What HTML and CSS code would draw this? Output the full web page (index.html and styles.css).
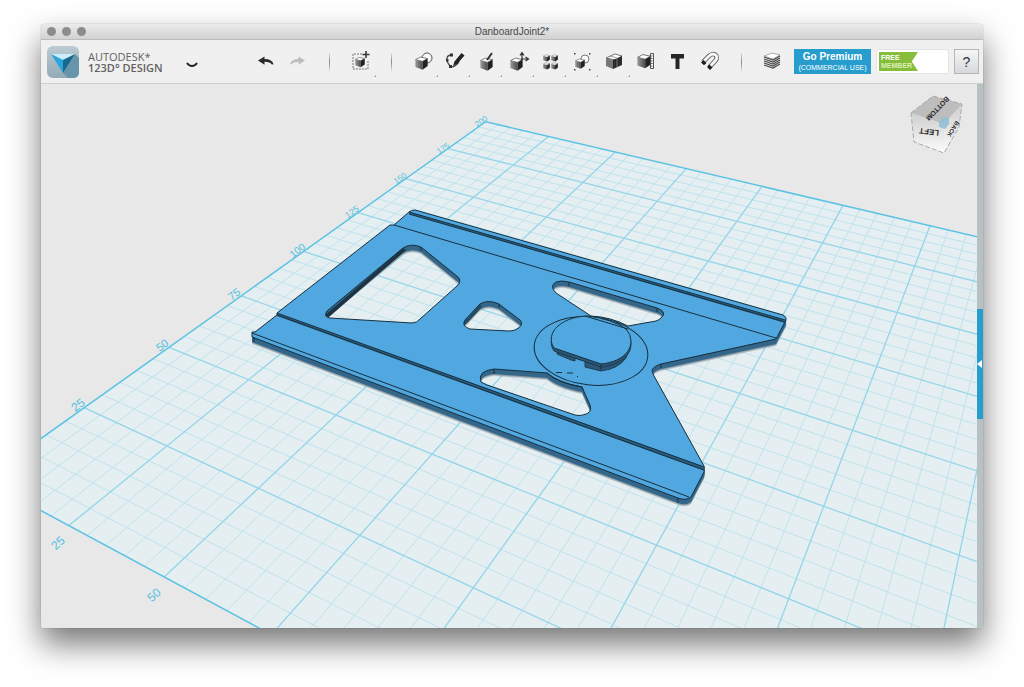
FILE: index.html
```html
<!DOCTYPE html>
<html lang="en">
<head>
    <meta charset="utf-8">
    <title>DanboardJoint2*</title>
    <link rel="stylesheet" href="styles.css">
</head>
<body>
<!-- shared icon shapes -->
<svg class="defs" width="0" height="0" aria-hidden="true">
    <defs>
        <linearGradient id="cube-side" x1="0" y1="0" x2="1" y2="0">
            <stop offset="0" stop-color="#9a9a9a"/>
            <stop offset="1" stop-color="#4c4c4c"/>
        </linearGradient>
        <symbol id="cube" viewBox="0 0 12 13">
            <path d="M0.5 3.4 5 1 11.5 2.4 7 5z" fill="#fff" stroke="#555" stroke-width=".7"/>
            <path d="M.3 3.4 7 5v7.7L.3 10.3z" fill="url(#cube-side)"/>
            <path d="M7 5l4.7-2.6v7L7 12.7z" fill="#222"/>
        </symbol>
    </defs>
</svg>

<div class="window">
    <header class="titlebar">
        <div class="lights"><span></span><span></span><span></span></div>
        <h1>DanboardJoint2*</h1>
    </header>

    <nav class="toolbar">
        <svg class="logo" viewBox="0 0 32 32">
            <defs>
                <linearGradient id="logo-bg" x1="0" y1="0" x2="0" y2="1">
                    <stop offset="0" stop-color="#bccbd3"/>
                    <stop offset="1" stop-color="#93aab7"/>
                </linearGradient>
            </defs>
            <rect width="32" height="32" rx="6" fill="url(#logo-bg)"/>
            <path d="M28 8l4 4v14q0 6-6 6h-5l-5-5z" fill="#6795a9"/>
            <path d="M4 8h24l-12 6z" fill="#c9eef9"/>
            <path d="M4 8l12 6v13z" fill="#29a5dc"/>
            <path d="M28 8l-12 6v13z" fill="#17688f"/>
        </svg>
        <div class="brand">
            <span class="maker">AUTODESK*</span>
            <span class="product">123D° DESIGN</span>
        </div>
        <button class="tool" aria-label="Menu">
            <svg viewBox="0 0 24 24"><path d="M7 14q2 3 5 3t5-3" fill="none" stroke="#222" stroke-width="2"/></svg>
        </button>

        <div class="tools">
            <button class="tool" aria-label="Undo">
                <svg viewBox="0 0 24 24"><path d="M4 11.500l6.500-4v2.500q8 0 9 5.500l-2-.3q-1-2.500-7-2.500v3z" fill="#2a2a2a"/></svg>
            </button>
            <button class="tool" aria-label="Redo">
                <svg viewBox="0 0 24 24"><path d="M19 11.500l-6.500-4v2.500q-7 0-8.500 5.500l1.500-.2q1.500-2.600 7-2.600v3z" fill="#bbb"/></svg>
            </button>
            <span class="sep"></span>
            <button class="tool more" aria-label="Insert">
                <svg viewBox="0 0 24 24">
                    <path d="M14 5H5v15h15v-8" fill="none" stroke="#777" stroke-dasharray="2 1"/>
                    <use href="#cube" x="7" y="7" width="10" height="12"/>
                    <path d="M18 2v7M14.500 5.500h7" stroke="#333" stroke-width="1.500"/>
                </svg>
            </button>
            <span class="sep"></span>
            <button class="tool more" aria-label="Primitives">
                <svg viewBox="0 0 24 24">
                    <circle cx="17" cy="9" r="5" fill="#fafafa" stroke="#555"/>
                    <use href="#cube" x="5" y="7" width="13" height="14"/>
                </svg>
            </button>
            <button class="tool more" aria-label="Sketch">
                <svg viewBox="0 0 24 24">
                    <path d="M10 6C3 6 4 12 8 17c2 2.500 8-1 9-5" fill="none" stroke="#444" stroke-width="1.300"/>
                    <path d="M8 4.500h3v3H8zM4 10h2.500v2.500H4zM7 16h3v3H7z" fill="#333"/>
                    <path d="M19.500 4l3 2.500-7 8-4.500 2.500 1.500-4.500z" fill="#222"/>
                </svg>
            </button>
            <button class="tool more" aria-label="Construct">
                <svg viewBox="0 0 24 24">
                    <use href="#cube" x="6" y="8" width="13" height="14"/>
                    <path d="M13 11l5-7" stroke="#333" stroke-width="2"/>
                </svg>
            </button>
            <button class="tool more" aria-label="Modify">
                <svg viewBox="0 0 24 24">
                    <use href="#cube" x="4" y="8" width="13" height="14"/>
                    <path d="M16 11V4m-2 2.500 2-3 2 3M15 10h7m-2.500-2 3 2-3 2" fill="none" stroke="#333" stroke-width="1.200"/>
                </svg>
            </button>
            <button class="tool more" aria-label="Pattern">
                <svg viewBox="0 0 24 24">
                    <use href="#cube" x="5" y="5" width="7" height="8"/>
                    <use href="#cube" x="13" y="5" width="7" height="8"/>
                    <use href="#cube" x="5" y="13" width="7" height="8"/>
                    <use href="#cube" x="13" y="13" width="7" height="8"/>
                </svg>
            </button>
            <button class="tool more" aria-label="Grouping">
                <svg viewBox="0 0 24 24">
                    <circle cx="15" cy="10" r="4" fill="#fafafa" stroke="#777"/>
                    <use href="#cube" x="5" y="9" width="10" height="11"/>
                    <path d="M4 4h1.500v1.500H4zM19 4h1.500v1.500H19zM4 20h1.500v1.500H4zM19 20h1.500v1.500H19z" fill="#444"/>
                </svg>
            </button>
            <button class="tool more" aria-label="Combine">
                <svg viewBox="0 0 24 24">
                    <path d="M4 9l9-4 7 2-6 4z" fill="#fff" stroke="#555" stroke-width=".8"/>
                    <path d="M4 9l7 2v9l-7-3z" fill="#777"/>
                    <path d="M11 11l9-4v9l-9 4z" fill="#2c2c2c"/>
                    <path d="M8 7l7 2v9" fill="none" stroke="#888" stroke-width=".8"/>
                </svg>
            </button>
            <button class="tool" aria-label="Measure">
                <svg viewBox="0 0 24 24">
                    <use href="#cube" x="3" y="4" width="14" height="16"/>
                    <path d="M16.500 4.500h3v15h-3zM17 7h1.500M17 9.500h1.500M17 12h1.500M17 14.500h1.500M17 17h1.500" fill="#fff" stroke="#444" stroke-width=".9"/>
                </svg>
            </button>
            <button class="tool" aria-label="Text">
                <svg viewBox="0 0 24 24"><path d="M5 5h13v4.500h-4.500V20h-4V9.500H5z" fill="#262626"/></svg>
            </button>
            <button class="tool" aria-label="Snap">
                <svg viewBox="0 0 24 24">
                    <path d="M5 13l6-6c5-4.500 10 0 6.500 4.500l-6 6.500" fill="none" stroke="#555" stroke-width="4.500"/>
                    <path d="M5 13l6-6c5-4.500 10 0 6.500 4.500l-6 6.500" fill="none" stroke="#f6f6f6" stroke-width="2.800"/>
                    <path d="M3 13.500l2.500-2.500 3 3-2.500 2.200zM9 18l2.500-2.500 3 3-2.500 2.500z" fill="#1e1e1e"/>
                </svg>
            </button>
            <span class="sep"></span>
            <button class="tool" aria-label="Materials">
                <svg viewBox="0 0 24 24">
                    <path d="M4 7l8-3 8 2-7 4z" fill="#fff" stroke="#777" stroke-width=".6"/>
                    <path d="M4 8l9 3 7-4M4 10l9 3 7-4M4 12l9 3 7-4M4 14l9 3 7-4M4 16l9 3 7-4" fill="none" stroke="#4a4a4a" stroke-width="1.200"/>
                </svg>
            </button>
        </div>

        <div class="account">
            <a class="premium" href="#premium"><strong>Go Premium</strong><span>(COMMERCIAL USE)</span></a>
            <a class="member" href="#account"><span class="flag">FREE<small>MEMBER</small></span></a>
            <button class="help">?</button>
        </div>
    </nav>

    <main class="workspace">
        <svg class="scene" viewBox="41 84 936 544" preserveAspectRatio="xMinYMin slice">
            <defs>
                <path id="plate" fill-rule="evenodd" d="
                    M409 212Q411 210 415 210L783 315Q787 317 786 320L776 339L661 364Q652 367 652 371L654 376L704 466Q705 469 704 472L691 497Q686 501 678 498L252 337V332H255L277 315V313L390 225L394 225Z
                    M327 311L403 248Q411 243 421 247L458 277Q462 281 457 286L420 319Q417 323 412 323L330 318Q323 317 327 311Z
                    M465 320L480 304Q488 299 499 304L520 320Q525 325 515 330Q512 331 508 331L470 329Q461 326 465 320Z
                    M556 293Q549 286 556 282Q561 280 569 282L657 308Q668 312 661 318Q659 320 656 321L628 326Q611 317 591 316Z
                    M481 382Q477 371 494 369L547 373Q557 382 582 387L590 405Q593 413 583 415Q579 416 575 415L487 385Z"/>
                <path id="knob" d="M554 348C549 341 551 332 558 326C566 319 578 316 588 316Q612 319 626 329Q631 334 631 341C631 353 620 362 601 364Z"/>
                <clipPath id="floor-hole"><path d="M327 311L403 248Q411 243 421 247L458 277Q462 281 457 286L420 319Q417 323 412 323L330 318Q323 317 327 311Z"/></clipPath>
                <clipPath id="small-hole"><path d="M465 320L480 304Q488 299 499 304L520 320Q525 325 515 330L470 329Q461 326 465 320Z"/></clipPath>
            </defs>

            <g id="grid"></g>

            <!-- plate thickness: the same outline stacked downwards -->
            <g fill="#8c9ba3">
                <use href="#plate" y="7" opacity=".5"/>
                <use href="#plate" y="6"/>
            </g>
            <g fill="#34678a">
                <use href="#plate" y="5"/>
                <use href="#plate" y="4"/>
                <use href="#plate" y="3"/>
                <use href="#plate" y="2"/>
                <use href="#plate" y="1"/>
            </g>
            <path d="M324 316L403 248L406 250L329 317Z" fill="#1d3444" clip-path="url(#floor-hole)"/>
            <path d="M463 324L480 304L482 307L466 324Z" fill="#274a61" clip-path="url(#small-hole)"/>
            <use href="#plate" fill="#51a7df" stroke="#17303f" stroke-width="1"/>

            <!-- rims and bends -->
            <path d="M409 212L785 320V323L409 214Z" fill="#2b5f80"/>
            <path d="M277 313L705 467V471L277 316Z" fill="#2b5f80"/>
            <g class="edges">
                <path d="M409 212L785 320M409 214L785 322"/>
                <path d="M394 225L776 338"/>
                <path d="M277 313L704 467M277 315L704 470"/>
                <path d="M252 333L689 497"/>
                <path d="M254 337V342M678 498V503M421 247V251M499 304V308M569 282V286M657 308V312M494 370V374M661 364V368"/>
                <path d="M547 373Q560 384 582 387L583 390"/>
                <ellipse cx="591" cy="351" rx="57" ry="34" transform="rotate(6 591 351)"/>
                <path d="M556 372.500h6M567 373h6M577 376l1 1" />
            </g>

            <!-- knob -->
            <path d="M557 350V354L571 360L575 361V358L585 361V367L601 371Q618 369 626 358L631 342L601 364Z" fill="#2b5878" stroke="#17303f" stroke-width=".8"/>
            <use href="#knob" y="3" fill="#2b5878" stroke="#17303f" stroke-width=".8"/>
            <path d="M601 364V370" class="edge"/>
            <use href="#knob" fill="#51a7df" stroke="#17303f" stroke-width="1"/>
            <path d="M585 316L628 329" class="edge"/>

            <g class="ruler">
                <text x="78" y="409" font-size="12" transform="rotate(-38 78 405)">25</text>
                <text x="162" y="349" font-size="11" transform="rotate(-38 162 345)">50</text>
                <text x="234" y="298" font-size="11" transform="rotate(-38 234 294)">75</text>
                <text x="297" y="254" font-size="10" transform="rotate(-38 297 250)">100</text>
                <text x="352" y="215" font-size="9" transform="rotate(-36 352 212)">125</text>
                <text x="400" y="181" font-size="8" transform="rotate(-36 400 178)">150</text>
                <text x="443" y="151" font-size="8" transform="rotate(-36 443 148)">175</text>
                <text x="481" y="124" font-size="8" transform="rotate(-36 481 121)">200</text>
                <text x="58" y="547" font-size="12" transform="rotate(-42 58 543)">25</text>
                <text x="154" y="599" font-size="12" transform="rotate(-42 154 595)">50</text>
            </g>
        </svg>

        <svg class="viewcube" viewBox="0 0 56 62">
            <defs>
                <linearGradient id="face" x1="0" y1="0" x2="0" y2="1">
                    <stop offset="0" stop-color="#cfcfcf"/>
                    <stop offset="1" stop-color="#fbfbfb"/>
                </linearGradient>
            </defs>
            <path d="M2 18L35 29L35 58L5 47Z" fill="url(#face)"/>
            <path d="M35 29L53 9L50 32L35 58Z" fill="url(#face)"/>
            <path d="M2 18L24 1L53 9L35 29Z" fill="#bdbdbd"/>
            <path d="M2 18L24 1L53 9L50 32L35 58L5 47Z" fill="none" stroke="#aaa" stroke-dasharray="5 2"/>
            <text x="29" y="17" font-size="7" transform="rotate(134 29 14)">BOTTOM</text>
            <text x="20" y="40" font-size="8" transform="rotate(187 20 37)">LEFT</text>
            <text x="44" y="36" font-size="6" transform="rotate(122 44 34)">BACK</text>
            <path d="M30 27l4-5 6 1v6l-4 5-6-2z" fill="#90c1d3" opacity=".9"/>
        </svg>

        <aside class="drawer">
            <button class="handle" aria-label="Open parts panel"></button>
        </aside>
    </main>
</div>
<script src="grid.js"></script>
</body>
</html>
```
FILE: styles.css
```css
* {
    box-sizing: border-box;
}
body {
    margin: 0;
    height: 100vh;
    padding: 24px 41px 59px;
    display: flex;
    background: #fff;
    font-family: "Liberation Sans", Arial, sans-serif;
    overflow: hidden;
}
.defs {
    position: absolute;
}
.window {
    flex: 1;
    min-width: 0;
    display: flex;
    flex-direction: column;
    border-radius: 4px 4px 2px 2px;
    box-shadow: 0 0 1px rgba(0, 0, 0, 0.5), 0 16px 32px rgba(0, 0, 0, 0.54);
}
.titlebar {
    height: 16px;
    display: grid;
    grid-template-columns: 1fr auto 1fr;
    align-items: center;
    padding: 0 6px;
    border-bottom: 1px solid #bdbdbd;
    border-radius: 4px 4px 0 0;
    background: linear-gradient(#ebebeb, #d2d2d2);
}
.titlebar h1 {
    margin: 0;
    font-size: 10px;
    font-weight: normal;
    color: #484848;
}
.lights {
    display: flex;
    gap: 6px;
}
.lights span {
    width: 9px;
    height: 9px;
    border-radius: 50%;
    background: #8c8b90;
}
.toolbar {
    height: 44px;
    display: flex;
    align-items: center;
    padding: 0 4px 0 6px;
    border-bottom: 1px solid #cfcfcf;
    background: #f0f0f0;
}
.logo {
    width: 32px;
    height: 32px;
}
.brand {
    width: 88px;
    margin-left: 9px;
    display: flex;
    flex-direction: column;
    font-family: "Open Sans", sans-serif;
    font-size: 11px;
    line-height: 11px;
    color: #626262;
    white-space: nowrap;
}
.product {
    font-weight: 600;
}
.tool {
    width: 32px;
    height: 43px;
    padding: 0 0 2px;
    display: flex;
    align-items: center;
    justify-content: center;
    border: 0;
    background: none;
}
.tool svg {
    width: 24px;
    height: 24px;
}
.tool:hover {
    background: #e2e2e2;
}
.more {
    position: relative;
}
.more::after {
    content: "";
    position: absolute;
    right: 0;
    bottom: 6px;
    border: 1px solid #999;
    border-top-color: transparent;
    border-left-color: transparent;
}
.tools {
    margin-left: 42px;
    display: flex;
    align-items: center;
}
.sep {
    width: 30px;
    height: 18px;
    background: linear-gradient(#ddd, #888, #ddd) center / 1px 100% no-repeat;
}
.account {
    margin-left: auto;
    display: flex;
    align-items: center;
    gap: 5px;
}
.premium {
    width: 77px;
    height: 25px;
    display: flex;
    flex-direction: column;
    align-items: center;
    justify-content: center;
    background: #269dcd;
    color: #fff;
    text-decoration: none;
    white-space: nowrap;
}
.premium strong {
    font-size: 10px;
    line-height: 12px;
}
.premium span {
    font-size: 7px;
    line-height: 10px;
}
.member {
    width: 73px;
    height: 25px;
    padding: 2px;
    border: 1px solid #e4e4e4;
    border-radius: 3px;
    background: #fff;
    text-decoration: none;
}
.flag {
    display: block;
    width: 39px;
    height: 19px;
    padding: 2px;
    background: #86bd3c;
    clip-path: polygon(0 0, 100% 0, 84% 50%, 100% 100%, 0 100%);
    color: #fff;
    font-size: 7px;
    font-weight: bold;
    line-height: 8px;
}
.flag small {
    display: block;
    font-size: 7px;
    color: #dcefb5;
}
.help {
    width: 25px;
    height: 25px;
    padding: 0;
    border: 1px solid #b5b5b5;
    background: linear-gradient(#f6f6f6, #d5d8dc);
    font-family: inherit;
    font-size: 14px;
    color: #333;
}
.workspace {
    position: relative;
    flex: 1;
    min-height: 0;
    display: flex;
    background: #e8e8e8;
    border-radius: 0 0 2px 2px;
    overflow: hidden;
}
.scene {
    flex: 1;
    min-width: 0;
    height: 100%;
}
.ground {
    fill: #e5eef0;
}
.minor, .major, .border {
    fill: none;
}
.minor {
    stroke: #bfe3ee;
}
.major {
    stroke: #93d5ea;
    stroke-width: 1.3;
}
.border {
    stroke: #5cc3e4;
    stroke-width: 1.5;
}
.edges, .edge {
    fill: none;
    stroke: #17303f;
    stroke-width: 1;
}
.ruler text {
    fill: #4fbfe2;
    text-anchor: middle;
}
.viewcube {
    position: absolute;
    top: 11px;
    right: 18px;
    width: 56px;
    height: 62px;
}
.viewcube text {
    fill: #2b2b2b;
    font-weight: bold;
    text-anchor: middle;
}
.drawer {
    width: 6px;
    display: flex;
    flex-direction: column;
    justify-content: center;
    padding-top: 16px;
    background: #b8c1c1;
}
.handle {
    height: 110px;
    padding: 0;
    border: 0;
    display: flex;
    align-items: center;
    background: #269dcd;
}
.handle::before {
    content: "";
    border: 4px solid transparent;
    border-right: 5px solid #fff;
    border-left: 0;
}
```
FILE: grid.js
```js
// Ground grid, 200 x 200 units, drawn in perspective.
// Screen corners of the patch u 0..150, v 50..200
const p0 = [169, 347.3], p1 = [788.7, 598.8], p2 = [930, 225.7], p3 = [485.7, 121.7];

const sx = p0[0] - p1[0] + p2[0] - p3[0];
const sy = p0[1] - p1[1] + p2[1] - p3[1];
const dx1 = p1[0] - p2[0], dy1 = p1[1] - p2[1];
const dx2 = p3[0] - p2[0], dy2 = p3[1] - p2[1];
const det = dx1 * dy2 - dx2 * dy1;
const g = (sx * dy2 - dx2 * sy) / det;
const h = (dx1 * sy - sx * dy1) / det;

function project(u, v) {
    const s = u / 150, t = (v - 50) / 150;
    const w = g * s + h * t + 1;
    const x = ((p1[0] - p0[0] + g * p1[0]) * s + (p3[0] - p0[0] + h * p3[0]) * t + p0[0]) / w;
    const y = ((p1[1] - p0[1] + g * p1[1]) * s + (p3[1] - p0[1] + h * p3[1]) * t + p0[1]) / w;
    return x.toFixed(1) + ' ' + y.toFixed(1);
}

function addPath(className, d) {
    const path = document.createElementNS('http://www.w3.org/2000/svg', 'path');
    path.setAttribute('class', className);
    path.setAttribute('d', d);
    document.getElementById('grid').appendChild(path);
}

const outline = 'M' + project(0, 0) + 'L' + project(200, 0) + 'L' + project(200, 200) + 'L' + project(0, 200) + 'Z';
let minor = '', major = '';
for (let i = 5; i < 200; i += 5) {
    const line = 'M' + project(i, 0) + 'L' + project(i, 200) + 'M' + project(0, i) + 'L' + project(200, i);
    if (i % 25 === 0) {
        major += line;
    } else {
        minor += line;
    }
}
addPath('ground', outline);
addPath('minor', minor);
addPath('major', major);
addPath('border', outline);
```
